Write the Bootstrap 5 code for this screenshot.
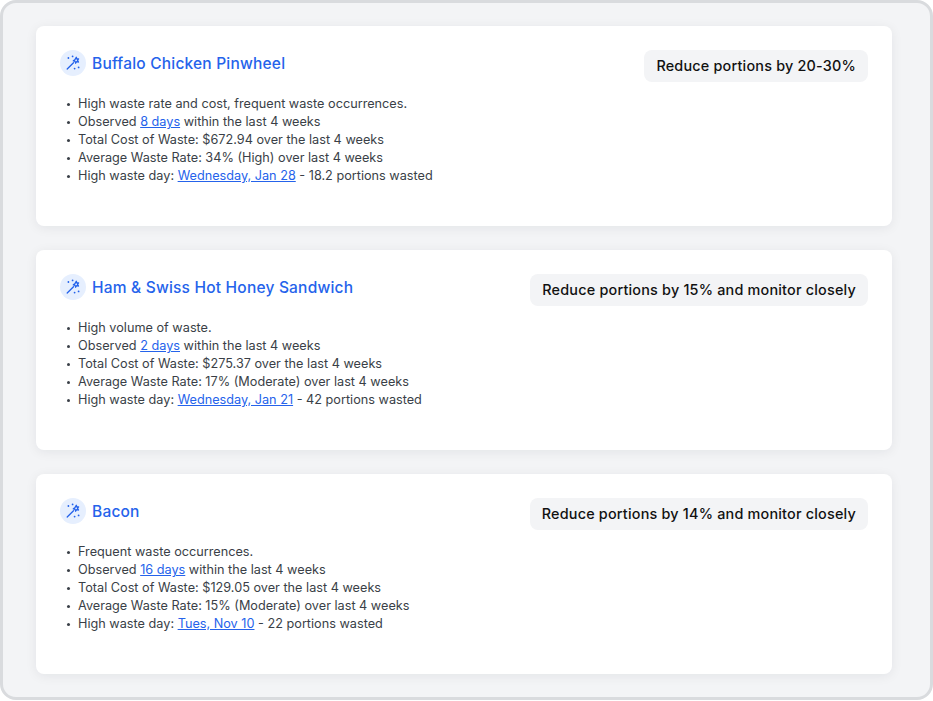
<!DOCTYPE html>
<html lang="en">

<head>
  <meta charset="UTF-8">
  <title>Waste recommendations</title>
  <link href="https://cdn.jsdelivr.net/npm/bootstrap@5.3.0/dist/css/bootstrap.min.css" rel="stylesheet">
  <script src="https://cdn.jsdelivr.net/npm/bootstrap@5.3.0/dist/js/bootstrap.bundle.min.js"></script>
  <style>
    html, body {
      height: 100%;
      overflow: hidden;
    }

    body {
      background: #fff;
      font-family: "Inter", "Liberation Sans", sans-serif;
    }

    .frame {
      height: 700px;
      padding: 23px 38px 0 33px;
      background: #f3f4f6;
      border: 3px solid #d9dbde;
      border-radius: 16px;
      gap: 24px;
      overflow: hidden;
    }

    .rec-card {
      height: 200px;
      flex-shrink: 0;
      padding: 24px;
      background: #fff;
      border-radius: 8px;
      box-shadow: 0 2px 12px rgba(17, 24, 39, 0.07);
    }

    .rec-head {
      gap: 6px;
    }

    .wand-badge {
      width: 26px;
      height: 26px;
      background: #e6effe;
      color: #2563eb;
    }

    .rec-title {
      padding-top: 2px;
      font-size: 15.5px;
      font-weight: 500;
      line-height: 24px;
      color: #2563eb;
      letter-spacing: .2px;
    }

    .rec-pill {
      padding: 0 12px;
      height: 32px;
      line-height: 32px;
      background: #f3f4f6;
      border-radius: 8px;
      font-size: 14.4px;
      font-weight: 500;
      letter-spacing: .2px;
      color: #111;
    }

    .rec-list {
      margin: 13px 0 0;
      padding-left: 18px;
      list-style: none;
      font-size: 12.7px;
      line-height: 18px;
      color: #3a3f47;
    }

    .rec-list li::before {
      content: "";
      display: inline-block;
      width: 3px;
      height: 3px;
      margin-left: -11.5px;
      margin-right: 8.5px;
      border-radius: 50%;
      background: #3a3f47;
      vertical-align: middle;
    }

    .rec-list a {
      color: #2563eb;
    }
  </style>
</head>

<body>
  <div class="frame d-flex flex-column">

    <div class="rec-card">
      <div class="d-flex justify-content-between align-items-start">
        <div class="rec-head d-flex align-items-center">
          <span class="wand-badge rounded-circle d-flex align-items-center justify-content-center">
            <svg width="16" height="16" viewBox="0 0 16 16" fill="none" stroke="currentColor" stroke-width="1.3" stroke-linecap="round" stroke-linejoin="round">
              <path d="M2.2 14 8.5 7.7" />
              <path d="M11.3 2.2l.5 1.8 1.8-.1-1.1 1.5 1 1.6-1.8-.3-1.1 1.5-.5-1.8-1.8-.5 1.5-1z" />
              <path d="M3.4 3h.01M7.6 1.4h.01M13.6 12.4h.01M9.6 13.6h.01" stroke-width="1.8" />
            </svg>
          </span>
          <div class="rec-title">Buffalo Chicken Pinwheel</div>
        </div>
        <div class="rec-pill">Reduce portions by 20-30%</div>
      </div>
      <ul class="rec-list">
        <li>High waste rate and cost, frequent waste occurrences.</li>
        <li>Observed <a href="#">8 days</a> within the last 4 weeks</li>
        <li>Total Cost of Waste: $672.94 over the last 4 weeks</li>
        <li>Average Waste Rate: 34% (High) over last 4 weeks</li>
        <li>High waste day: <a href="#">Wednesday, Jan 28</a> - 18.2 portions wasted</li>
      </ul>
    </div>

    <div class="rec-card">
      <div class="d-flex justify-content-between align-items-start">
        <div class="rec-head d-flex align-items-center">
          <span class="wand-badge rounded-circle d-flex align-items-center justify-content-center">
            <svg width="16" height="16" viewBox="0 0 16 16" fill="none" stroke="currentColor" stroke-width="1.3" stroke-linecap="round" stroke-linejoin="round">
              <path d="M2.2 14 8.5 7.7" />
              <path d="M11.3 2.2l.5 1.8 1.8-.1-1.1 1.5 1 1.6-1.8-.3-1.1 1.5-.5-1.8-1.8-.5 1.5-1z" />
              <path d="M3.4 3h.01M7.6 1.4h.01M13.6 12.4h.01M9.6 13.6h.01" stroke-width="1.8" />
            </svg>
          </span>
          <div class="rec-title">Ham &amp; Swiss Hot Honey Sandwich</div>
        </div>
        <div class="rec-pill">Reduce portions by 15% and monitor closely</div>
      </div>
      <ul class="rec-list">
        <li>High volume of waste.</li>
        <li>Observed <a href="#">2 days</a> within the last 4 weeks</li>
        <li>Total Cost of Waste: $275.37 over the last 4 weeks</li>
        <li>Average Waste Rate: 17% (Moderate) over last 4 weeks</li>
        <li>High waste day: <a href="#">Wednesday, Jan 21</a> - 42 portions wasted</li>
      </ul>
    </div>

    <div class="rec-card">
      <div class="d-flex justify-content-between align-items-start">
        <div class="rec-head d-flex align-items-center">
          <span class="wand-badge rounded-circle d-flex align-items-center justify-content-center">
            <svg width="16" height="16" viewBox="0 0 16 16" fill="none" stroke="currentColor" stroke-width="1.3" stroke-linecap="round" stroke-linejoin="round">
              <path d="M2.2 14 8.5 7.7" />
              <path d="M11.3 2.2l.5 1.8 1.8-.1-1.1 1.5 1 1.6-1.8-.3-1.1 1.5-.5-1.8-1.8-.5 1.5-1z" />
              <path d="M3.4 3h.01M7.6 1.4h.01M13.6 12.4h.01M9.6 13.6h.01" stroke-width="1.8" />
            </svg>
          </span>
          <div class="rec-title">Bacon</div>
        </div>
        <div class="rec-pill">Reduce portions by 14% and monitor closely</div>
      </div>
      <ul class="rec-list">
        <li>Frequent waste occurrences.</li>
        <li>Observed <a href="#">16 days</a> within the last 4 weeks</li>
        <li>Total Cost of Waste: $129.05 over the last 4 weeks</li>
        <li>Average Waste Rate: 15% (Moderate) over last 4 weeks</li>
        <li>High waste day: <a href="#">Tues, Nov 10</a> - 22 portions wasted</li>
      </ul>
    </div>

  </div>
</body>

</html>
